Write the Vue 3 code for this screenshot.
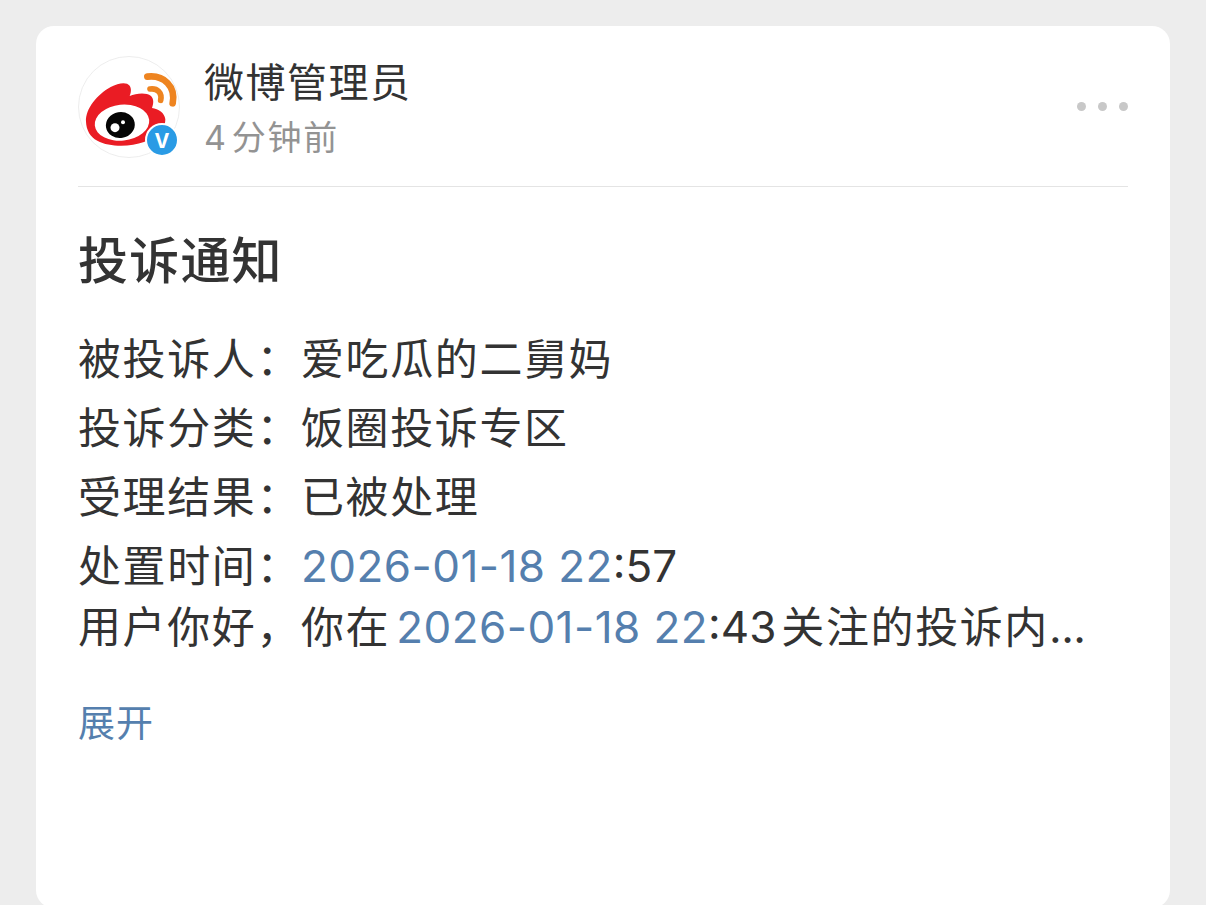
<template>
  <div class="page">
    <div class="card">
      <!-- 头部 -->
      <div class="card-header">
        <div class="avatar">
          <svg class="logo" viewBox="24 18 306 306">
            <circle cx="177" cy="171" r="151.5" fill="#fff" stroke="#e9e9e9" stroke-width="2.5" />
            <path
              d="M48 215C46 176 82 133 122 111C146 98 170 95 179 107C185 116 183 128 179 138C198 130 228 126 243 138C252 147 251 160 246 174C265 177 284 188 286 208C288 232 260 262 222 276C180 291 119 292 82 272C60 260 49 240 48 215Z"
              fill="#ea1c24"
            />
            <ellipse cx="156" cy="218" rx="82" ry="54" fill="#fff" transform="rotate(-6 156 218)" />
            <ellipse cx="151" cy="225" rx="43.5" ry="39" fill="#050505" transform="rotate(-10 151 225)" />
            <circle cx="135" cy="233" r="13.5" fill="#fff" />
            <circle cx="159" cy="217" r="6" fill="#fff" />
            <path d="M232 80C282 74 318 110 308 160" fill="none" stroke="#ee8420" stroke-width="20" stroke-linecap="round" />
            <path d="M240 117C262 114 277 128 272 151" fill="none" stroke="#ee8420" stroke-width="17" stroke-linecap="round" />
          </svg>
          <span class="badge">V</span>
        </div>
        <div class="user">
          <div class="name">微博管理员</div>
          <div class="time"><span class="time-num">4</span>分钟前</div>
        </div>
        <div class="more">
          <i v-for="n in 3" :key="n" class="dot"></i>
        </div>
      </div>

      <!-- 正文 -->
      <div class="title">投诉通知</div>
      <div class="content">
        <div v-for="row in rows" :key="row.label" class="row">
          {{ row.label }}：{{ row.value }}
        </div>
        <div class="row last">
          处置时间：<span class="num link">2026-01-18 22</span><span class="num clock">:57</span>
        </div>
        <div class="row last">
          用户你好，你在<span class="num link inline">2026-01-18 22</span><span class="num clock minute">:43</span>关注的投诉内<span class="num dots">...</span>
        </div>
      </div>
      <div class="expand">展开</div>
    </div>
  </div>
</template>

<script setup>
const rows = [
  { label: '被投诉人', value: '爱吃瓜的二舅妈' },
  { label: '投诉分类', value: '饭圈投诉专区' },
  { label: '受理结果', value: '已被处理' }
]
</script>

<style>
body {
  margin: 0;
  background: #ededed;
}
</style>

<style scoped>
.page {
  box-sizing: border-box;
  height: 905px;
  padding: 26px 36px 0;
  overflow: hidden;
  background: #ededed;
  color: #333;
  font-family: 'Noto Sans CJK SC', sans-serif;
}

.card {
  box-sizing: border-box;
  height: 882px;
  padding: 0 42px;
  background: #fff;
  border-radius: 18px;
}

/* 头部 */
.card-header {
  display: flex;
  box-sizing: border-box;
  height: 161px;
  padding-top: 30px;
  border-bottom: 1px solid #e4e4e4;
}

.avatar {
  position: relative;
  width: 102px;
  height: 102px;
}

.logo {
  display: block;
  width: 102px;
  height: 102px;
}

.badge {
  position: absolute;
  left: 67px;
  top: 67px;
  width: 30px;
  height: 30px;
  border: 2px solid #fff;
  border-radius: 50%;
  background: #2a9be5;
  color: #fff;
  font: 700 20px/32px Inter, sans-serif;
  text-align: center;
}

.user {
  flex: 1;
  margin-left: 24px;
}

.name {
  height: 53px;
  line-height: 48px;
  font-size: 40px;
  letter-spacing: 1.5px;
}

.time {
  height: 54px;
  line-height: 54px;
  font-size: 34px;
  letter-spacing: 1.8px;
  color: #939393;
}

.time-num {
  margin-right: 4px;
  font-family: Inter, sans-serif;
}

.more {
  display: flex;
  gap: 12px;
  margin-top: 46px;
}

.dot {
  width: 9px;
  height: 9px;
  border-radius: 50%;
  background: #c8c8c8;
}

/* 正文 */
.title {
  margin-top: 37px;
  height: 66px;
  line-height: 66px;
  font-size: 50px;
  font-weight: 500;
  letter-spacing: 1.2px;
}

.content {
  margin-top: 32px;
  font-size: 43px;
  letter-spacing: 1.6px;
  white-space: nowrap;
}

.row {
  height: 69px;
  line-height: 69px;
}

.row.last {
  height: 61px;
}

.num {
  font-family: Inter, sans-serif;
  font-size: 44px;
  letter-spacing: 0;
}

.link {
  color: #557fae;
  letter-spacing: 0.45px;
}

.clock {
  font-feature-settings: 'case';
}

.dots {
  letter-spacing: -0.5px;
}

.inline {
  margin-left: 6px;
}

.minute {
  margin-right: 5px;
}

.expand {
  margin-top: 43px;
  line-height: 54px;
  font-size: 37px;
  letter-spacing: 1px;
  color: #557fae;
}
</style>
